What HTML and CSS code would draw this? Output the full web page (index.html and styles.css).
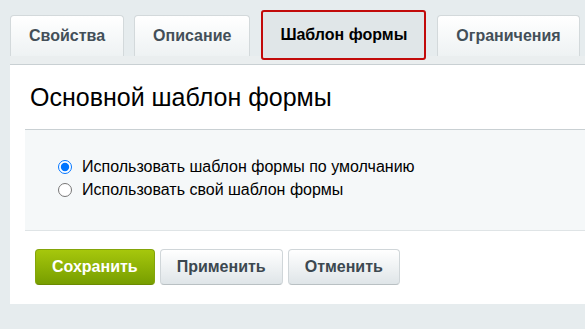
FILE: index.html
```html
<!DOCTYPE html>
<html lang="ru">
<head>
  <meta charset="UTF-8" />
  <meta name="viewport" content="width=device-width, initial-scale=1.0" />
  <title>Шаблон формы</title>
  <link rel="stylesheet" href="styles.css">
</head>
<body>
  <div class="tabs">
    <div class="tab">Свойства</div>
    <div class="tab">Описание</div>
    <div class="tab active">Шаблон формы</div>
    <div class="tab">Ограничения</div>
  </div>

  <div class="panel">
    <h2 class="panel-title">Основной шаблон формы</h2>

    <div class="options">
      <label class="option">
        <input type="radio" name="tpl" checked />
        Использовать шаблон формы по умолчанию
      </label>
      <label class="option">
        <input type="radio" name="tpl" />
        Использовать свой шаблон формы
      </label>
    </div>

    <div class="buttons">
      <button class="btn btn-save">Сохранить</button>
      <button class="btn">Применить</button>
      <button class="btn">Отменить</button>
    </div>
  </div>
</body>
</html>
```

FILE: styles.css
```css
body {
  margin: 0;
  background: #e6ecee;
  font-family: "Liberation Sans", Arial, sans-serif;
  overflow: hidden;
}
.tabs {
  display: flex;
  align-items: flex-end;
  gap: 10px;
  padding: 10px 0 0 10px;
  height: 50px;
  position: relative;
  z-index: 1;
}
.tab {
  box-sizing: border-box;
  height: 41px;
  margin-bottom: 4px;
  padding: 0 18px;
  line-height: 40px;
  font-size: 16px;
  font-weight: bold;
  color: #434f58;
  background: linear-gradient(#ffffff, #eef2f3);
  border: 1px solid #d3d9db;
  border-bottom: none;
  border-radius: 4px 4px 0 0;
  white-space: nowrap;
}
.tab.active {
  height: 50px;
  margin: 0 1px;
  padding: 0 17px;
  line-height: 45px;
  color: #000;
  background: #e0e6e8;
  border: 2px solid #c20a0a;
  border-radius: 3px;
}
.panel {
  margin: -4px 0 0 10px;
  padding: 0 0 19px;
  background: #fff;
  border-top: 8px solid #eaeeef;
  box-shadow: inset 0 1px 0 #c9d0d3;
}
.panel-title {
  margin: 0;
  padding: 18px 0 0 20px;
  font-size: 25px;
  line-height: 30px;
  font-weight: normal;
  color: #000;
}
.options {
  margin: 17px 0 0 15px;
  padding: 25px 0 29px 33px;
  background: #f5f8f9;
  border-top: 1px solid #c9d0d3;
  border-bottom: 1px solid #dfe4e6;
}
.option {
  display: flex;
  align-items: center;
  height: 23px;
  font-size: 16px;
  color: #000;
}
.option input {
  width: 14px;
  height: 14px;
  margin: 0 10px 0 0;
}
.buttons {
  display: flex;
  gap: 5px;
  margin: 18px 0 0 25px;
}
.btn {
  height: 36px;
  padding: 0 16px;
  font-family: "Liberation Sans", Arial, sans-serif;
  font-size: 16px;
  font-weight: bold;
  color: #3c4850;
  background: linear-gradient(#ffffff, #dfe5e8);
  border: 1px solid #d0d6d9;
  border-bottom-color: #b9c0c3;
  border-radius: 4px;
}
.btn-save {
  color: #fff;
  background: linear-gradient(#a6c70c, #779e00);
  border-color: #84a40a;
  border-bottom-color: #6b8a00;
}
```
